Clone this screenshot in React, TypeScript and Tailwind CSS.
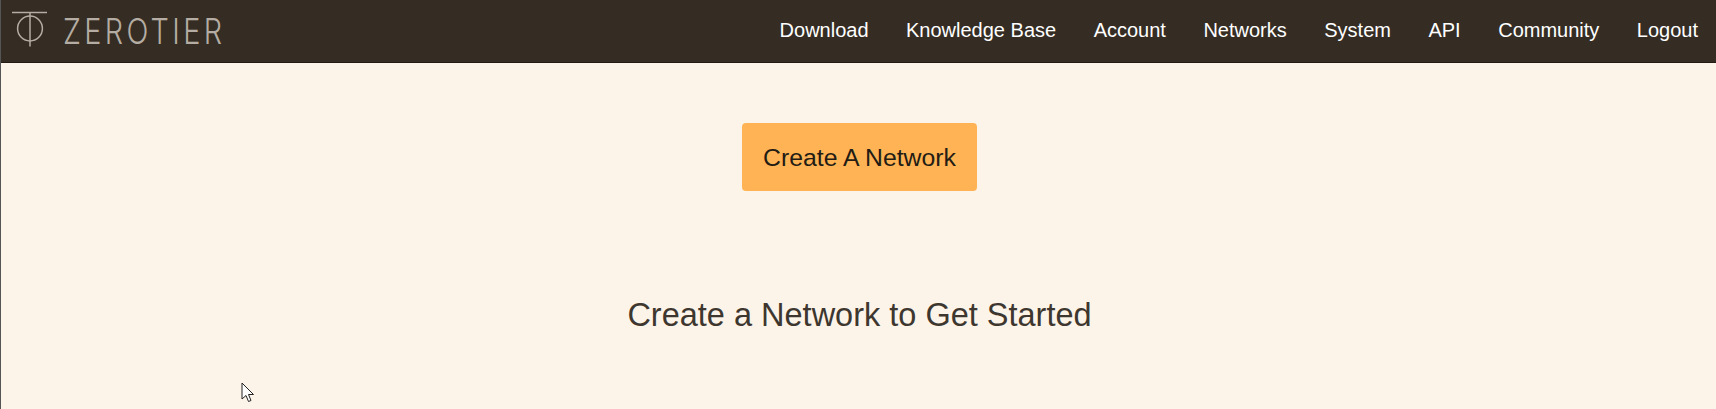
const links = ['Download', 'Knowledge Base', 'Account', 'Networks', 'System', 'API', 'Community', 'Logout'];

function Logo() {
    return (
        <div className="flex items-center">
            <svg width="40" height="40" viewBox="0 0 40 40" fill="none" stroke="#b5ada3" strokeWidth="1.5" className="ml-[11px]">
                <path d="M0 1.5 H35" />
                <path d="M18 1.5 V35.5" />
                <circle cx="18" cy="17.5" r="12.4" />
            </svg>
            <span className="ml-[11px] origin-left scale-x-[0.8] text-[36px] leading-none font-light tracking-[4.2px] text-[#b5ada3] [font-family:Inter,sans-serif]">
                ZEROTIER
            </span>
        </div>
    );
}

function Cursor() {
    return (
        <svg width="14" height="21" viewBox="0 0 14 21" className="absolute top-[382px] left-[240px]">
            <path d="M1 1 V17 L5 13.5 L7.5 19.5 L10 18.5 L7.5 12.5 H12.5 Z" fill="#fff" stroke="#222" strokeWidth="1" />
        </svg>
    );
}

export default function App() {
    return (
        <div className="relative h-[409px] overflow-hidden border-l border-[#555] bg-[#fdf4e9] [font-family:'Liberation_Sans',Arial,sans-serif]">
            <nav className="flex h-[63px] items-center justify-between border-b border-[#241c14] bg-[#352d24]">
                <Logo />
                <ul className="flex items-center gap-[37.5px] pr-[18px] pb-[2px] text-[20px] text-white">
                    {links.map((l) => (
                        <li key={l}>{l}</li>
                    ))}
                </ul>
            </nav>

            <div className="flex flex-col items-center">
                <button className="mt-[60px] ml-[2px] h-[68px] w-[235px] rounded-[4px] bg-[#ffb354] pt-[1px] text-[24.8px] text-[#231c14]">Create A Network</button>
                <h2 className="mt-[104px] ml-[2px] text-[32.5px] leading-[40px] font-normal text-[#3d372f]">Create a Network to Get Started</h2>
            </div>

            <Cursor />
        </div>
    );
}
